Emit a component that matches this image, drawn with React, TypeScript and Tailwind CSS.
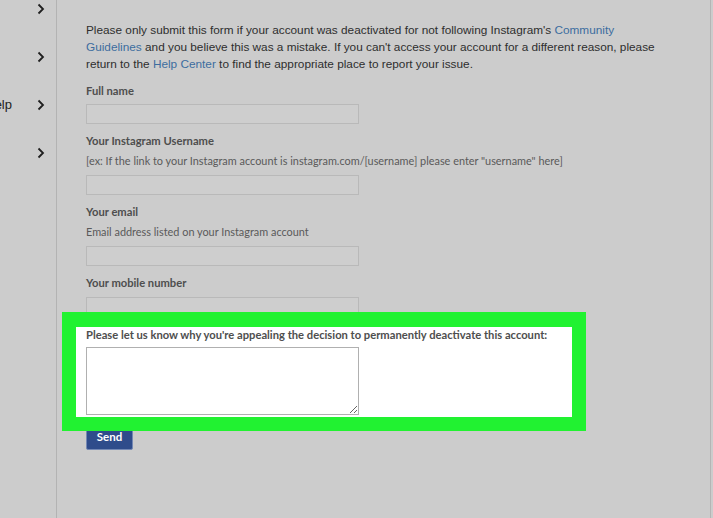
import React from 'react';

const ChevronRight: React.FC = () => (
  <svg width="8" height="12" viewBox="0 0 8 12" className="shrink-0">
    <polyline points="1.5,1.5 6,6 1.5,10.5" fill="none" stroke="#1f1f1f" strokeWidth="1.8" />
  </svg>
);

const sideItems = ['', '', 'Help', ''];

const Label: React.FC<{ children: React.ReactNode; className?: string }> = ({ children, className = '' }) => (
  <div className={`h-[14px] whitespace-nowrap text-[11.2px] font-bold leading-[14px] text-[#4e4e4e] ${className}`}>{children}</div>
);

const Hint: React.FC<{ children: React.ReactNode; className?: string }> = ({ children, className = '' }) => (
  <div className={`h-[14px] whitespace-nowrap text-[10.9px] leading-[14px] text-[#5a5a5a] ${className}`}>{children}</div>
);

const Field: React.FC<{ className?: string }> = ({ className = '' }) => (
  <div className={`h-[20px] w-[273px] border border-[#b9b9b9] bg-[#cecece] ${className}`} />
);

export default function App() {
  return (
    <div className="flex h-[518px] w-[713px] overflow-hidden bg-[#cccccc] font-['Lato',sans-serif]">
      {/* sidebar, cut off on the left */}
      <div className="w-[57px] shrink-0 overflow-hidden border-r border-[#b3b3b3]">
        <div className="-mt-[15px] flex flex-col">
          {sideItems.map((t, i) => (
            <div key={i} className="flex h-[48px] items-center justify-end pr-[11px]">
              <span className="mr-[25px] font-['Liberation_Sans',sans-serif] text-[13px] text-[#222]">{t}</span>
              <ChevronRight />
            </div>
          ))}
        </div>
      </div>

      {/* main */}
      <div className="w-[654px] shrink-0 border-r border-[#b5b5b5] pl-[29px] pt-[22px]">
        <p className="w-[578px] font-['Liberation_Sans',sans-serif] text-[11.8px] leading-[17px] text-[#2e2e2e]">
          Please only submit this form if your account was deactivated for not following Instagram's{' '}
          <span className="text-[#3c6c9f]">Community Guidelines</span> and you believe this was a mistake. If you can't
          access your account for a different reason, please return to the <span className="text-[#3c6c9f]">Help Center</span> to
          find the appropriate place to report your issue.
        </p>

        <Label className="mt-[11px]">Full name</Label>
        <Field className="mt-[6px]" />

        <Label className="mt-[10px]">Your Instagram Username</Label>
        <Hint className="mt-[6px]">
          [ex: If the link to your Instagram account is instagram.com/[username] please enter "username" here]
        </Hint>
        <Field className="mt-[7px]" />

        <Label className="mt-[10px]">Your email</Label>
        <Hint className="mt-[6px]">Email address listed on your Instagram account</Hint>
        <Field className="mt-[7px]" />

        <Label className="mt-[10px]">Your mobile number</Label>
        <Field className="mt-[7px]" />

        {/* highlighted section */}
        <div className="relative z-10 -ml-[24px] -mt-[5px] w-[524px] border-[14px] border-t-[15px] border-[#21f231]">
          <div className="h-[90px] bg-white pl-[10px] pt-[1px]">
            <Label>Please let us know why you're appealing the decision to permanently deactivate this account:</Label>
            <textarea className="mt-[5px] block h-[68px] w-[273px] border border-[#b0b0b0] bg-white outline-none" />
          </div>
        </div>

        <button className="-mt-[7px] block h-[26px] w-[47px] rounded-[2px] border border-[#7488b4] bg-[#2f4c8b] text-[11.5px] font-bold text-white">
          Send
        </button>
      </div>
    </div>
  );
}
